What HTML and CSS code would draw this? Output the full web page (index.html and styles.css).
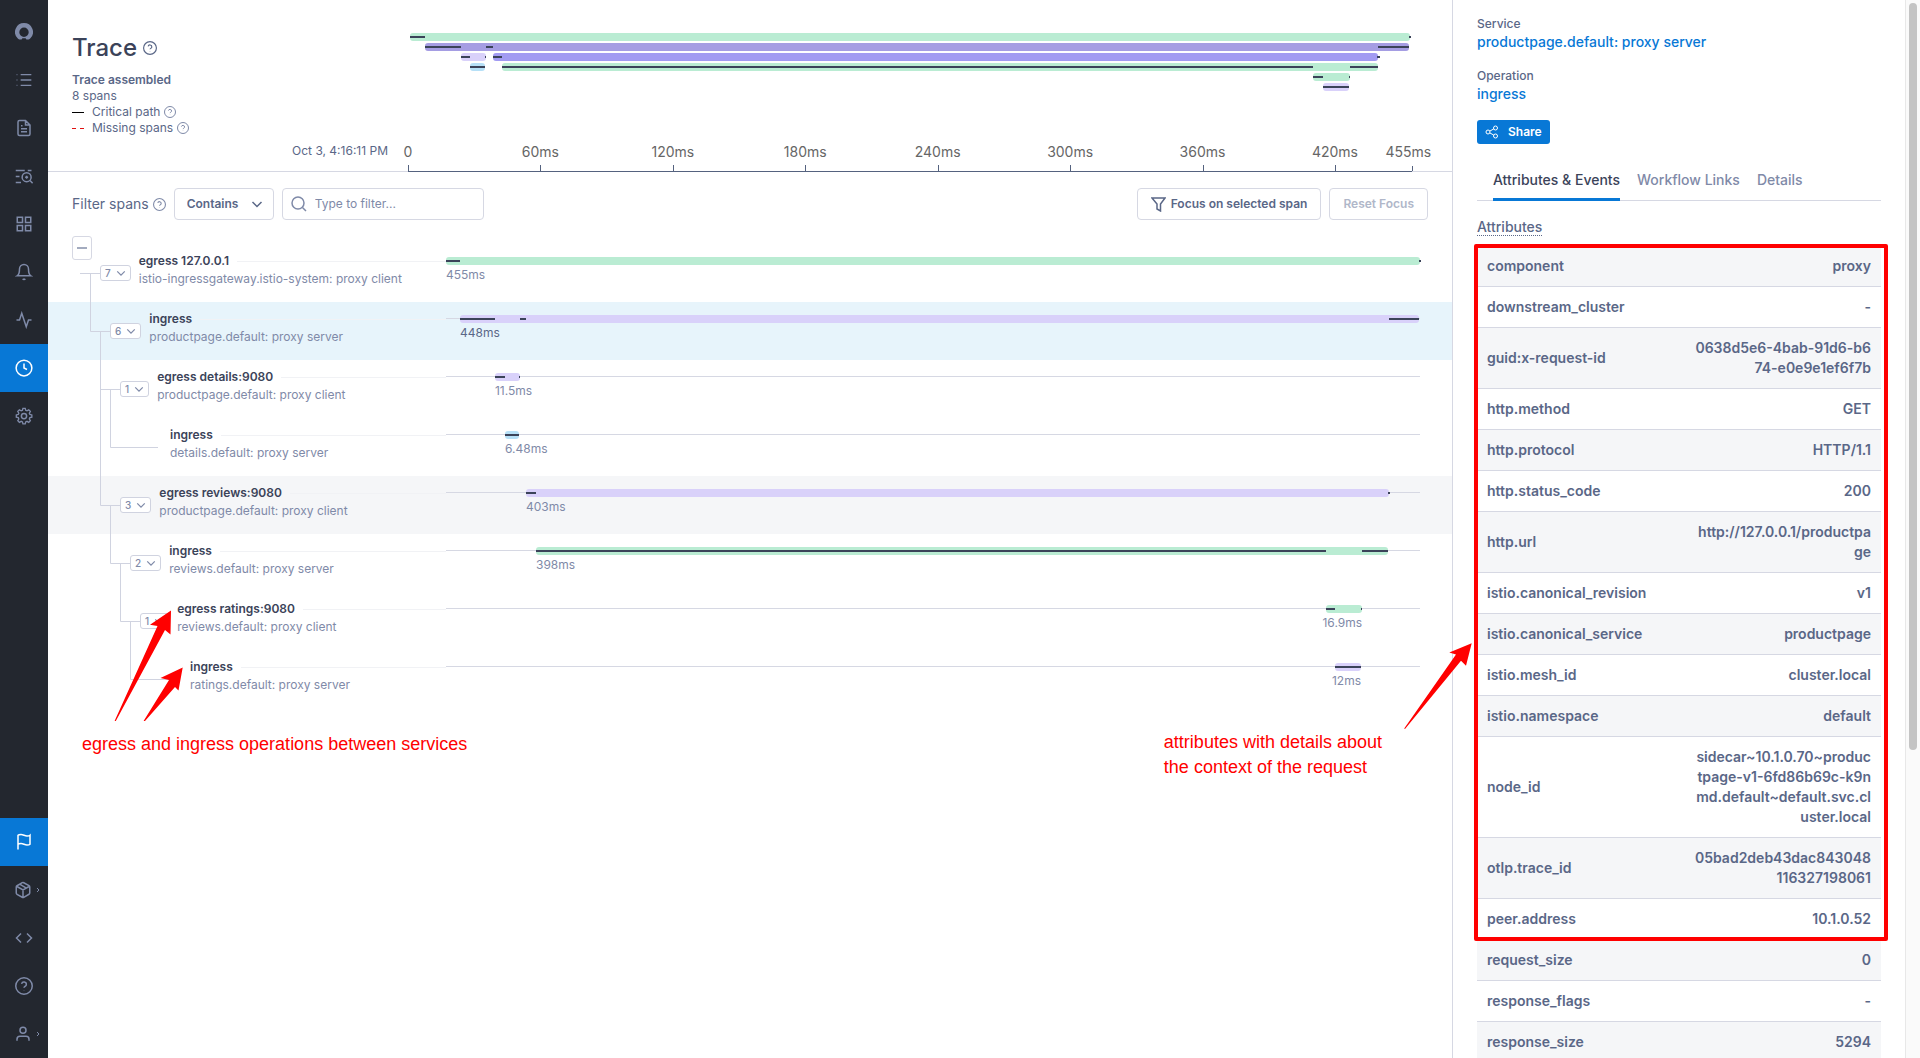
FILE: index.html
```html
<!DOCTYPE html>
<html lang="en">

<head>
    <meta charset="UTF-8">
    <meta name="viewport" content="width=device-width, initial-scale=1.0">
    <title>Trace</title>
    <link rel="stylesheet" href="styles.css">
</head>

<body>
    <!-- shared icons -->
    <svg class="sprite" aria-hidden="true">
        <symbol id="help" viewBox="0 0 24 24">
            <circle cx="12" cy="12" r="11" />
            <path d="M8.8 9.2a3.2 3.2 0 0 1 6.3 1c0 2.1-3.1 2.6-3.1 4M12 17.4v.4" />
        </symbol>
        <symbol id="chevron" viewBox="0 0 12 12">
            <path d="M1.5 4L6 8.5 10.500 4" />
        </symbol>
    </svg>

    <div class="app">
        <nav class="sidebar" aria-label="Main">
            <a href="#" class="nav-item" aria-label="Home">
                <svg class="nav-logo" width="18" height="18" viewBox="0 0 18 18"><path fill-rule="evenodd" d="M9 0a9 9 0 0 1 6.600 15.100c-.9 1-1.800 1.500-3 1.500h-1.200l-.8-1.400H7.400l-.8 1.400H5.400c-1.200 0-2.100-.5-3-1.500A9 9 0 0 1 9 0zM9 4.600a4.700 4.700 0 1 0 0 9.400 4.700 4.700 0 0 0 0-9.400z" /></svg>
            </a>
            <a href="#" class="nav-item" aria-label="Lists">
                <svg width="16" height="16" viewBox="0 0 24 24"><path d="M7 4h16M7 12h16M7 20h16M1 4h1M1 12h1M1 20h1" /></svg>
            </a>
            <a href="#" class="nav-item" aria-label="Notebooks">
                <svg width="18" height="18" viewBox="0 0 24 24"><path d="M14 2H6a2 2 0 0 0-2 2v16a2 2 0 0 0 2 2h12a2 2 0 0 0 2-2V8zM14 2v6h6M16 13H8M16 17H8M10 9H8" /></svg>
            </a>
            <a href="#" class="nav-item" aria-label="Explorer">
                <svg width="18" height="16" viewBox="0 0 24 21"><path d="M1 3h12M17 3h5M1 11h5M1 19h7" /><circle cx="15.500" cy="12" r="6" /><path d="M20 16.500l3.500 3.500M13.500 12h4M15.500 10v4" /></svg>
            </a>
            <a href="#" class="nav-item" aria-label="Dashboards">
                <svg width="18" height="18" viewBox="0 0 24 24"><path d="M3 3h7v7H3zM14 3h7v7h-7zM14 14h7v7h-7zM3 14h7v7H3z" /></svg>
            </a>
            <a href="#" class="nav-item" aria-label="Alerts">
                <svg width="18" height="18" viewBox="0 0 24 24"><path d="M18 8A6 6 0 0 0 6 8c0 7-3 9-3 9h18s-3-2-3-9M13.700 21a2 2 0 0 1-3.400 0" /></svg>
            </a>
            <a href="#" class="nav-item" aria-label="Streams">
                <svg width="18" height="18" viewBox="0 0 24 24"><path d="M22 12h-4l-3 9L9 3l-3 9H2" /></svg>
            </a>
            <a href="#" class="nav-item active" aria-label="Traces">
                <svg width="18" height="18" viewBox="0 0 24 24"><circle cx="12" cy="12" r="10.500" /><path d="M12 6v6l4 2" /></svg>
            </a>
            <a href="#" class="nav-item" aria-label="Settings">
                <svg width="18" height="18" viewBox="0 0 24 24"><circle cx="12" cy="12" r="3.500" /><path d="M10.300 1.500h3.400l.7 2.900 1.900.8 2.600-1.500 2.400 2.400-1.500 2.600.8 1.900 2.900.7v3.400l-2.900.7-.8 1.900 1.500 2.600-2.400 2.400-2.600-1.500-1.900.8-.7 2.900h-3.400l-.7-2.900-1.900-.8-2.600 1.500-2.400-2.400 1.500-2.600-.8-1.900-2.900-.7v-3.400l2.900-.7.8-1.900-1.500-2.600 2.400-2.400 2.600 1.500 1.900-.8z" transform="translate(1.300 .4) scale(.9)" /></svg>
            </a>

            <a href="#" class="nav-item active nav-bottom" aria-label="Get started">
                <svg width="18" height="18" viewBox="0 0 24 24"><path d="M4 15s1-1 4-1 5 2 8 2 4-1 4-1V3s-1 1-4 1-5-2-8-2-4 1-4 1zM4 22v-7" /></svg>
            </a>
            <a href="#" class="nav-item" aria-label="Packages">
                <svg width="18" height="18" viewBox="0 0 24 24"><path d="M16.500 9.400l-9-5.200M21 16V8a2 2 0 0 0-1-1.700l-7-4a2 2 0 0 0-2 0l-7 4A2 2 0 0 0 3 8v8a2 2 0 0 0 1 1.700l7 4a2 2 0 0 0 2 0l7-4a2 2 0 0 0 1-1.700zM3.300 7l8.700 5 8.700-5M12 22V12" /></svg>
                <svg class="nav-more" width="4" height="6" viewBox="0 0 4 6"><path d="M1 1l2 2-2 2" /></svg>
            </a>
            <a href="#" class="nav-item" aria-label="Developer">
                <svg width="18" height="18" viewBox="0 0 24 24"><path d="M16 18l6-6-6-6M8 6l-6 6 6 6" /></svg>
            </a>
            <a href="#" class="nav-item" aria-label="Help">
                <svg width="18" height="18"><use href="#help" /></svg>
            </a>
            <a href="#" class="nav-item" aria-label="Account">
                <svg width="18" height="18" viewBox="0 0 24 24"><path d="M20 21v-2a4 4 0 0 0-4-4H8a4 4 0 0 0-4 4v2" /><circle cx="12" cy="7" r="4" /></svg>
                <svg class="nav-more" width="4" height="6" viewBox="0 0 4 6"><path d="M1 1l2 2-2 2" /></svg>
            </a>
        </nav>

        <main class="trace">
            <header class="trace-header">
                <div class="summary">
                    <h1>Trace <svg class="icon" width="14" height="14"><use href="#help" /></svg></h1>
                    <p class="status">Trace assembled</p>
                    <p>8 spans</p>
                    <p class="legend"><i class="dash"></i>Critical path <svg class="icon" width="12" height="12"><use href="#help" /></svg></p>
                    <p class="legend"><i class="dash missing"></i>Missing spans <svg class="icon" width="12" height="12"><use href="#help" /></svg></p>
                    <p class="date">Oct 3, 4:16:11 PM</p>
                </div>
                <div class="overview">
                    <div class="minimap">
                        <div class="lane">
                            <span class="bar green" style="width:100%"></span>
                            <i class="crit" style="left:0;width:1.5%"></i>
                            <i class="crit" style="left:99.9%;width:.2%"></i>
                        </div>
                        <div class="lane">
                            <span class="bar purple" style="margin-left:1.5%;width:98.4%"></span>
                            <i class="crit" style="left:1.5%;width:3.6%"></i>
                            <i class="crit" style="left:7.6%;width:.7%"></i>
                            <i class="crit" style="left:96.8%;width:3.1%"></i>
                        </div>
                        <div class="lane">
                            <span class="bar lilac" style="margin-left:5.1%;width:2.5%"></span>
                            <span class="bar violet" style="margin-left:.7%;width:88.5%"></span>
                            <i class="crit" style="left:5.1%;width:.9%"></i>
                            <i class="crit" style="left:7.5%;width:.1%"></i>
                            <i class="crit" style="left:8.3%;width:.9%"></i>
                            <i class="crit" style="left:96.7%;width:.3%"></i>
                        </div>
                        <div class="lane">
                            <span class="bar blue" style="margin-left:6%;width:1.5%"></span>
                            <span class="bar green" style="margin-left:1.7%;width:87.6%"></span>
                            <i class="crit" style="left:6%;width:1.5%"></i>
                            <i class="crit" style="left:9.2%;width:81.1%"></i>
                            <i class="crit" style="left:94%;width:2.8%"></i>
                        </div>
                        <div class="lane">
                            <span class="bar green" style="margin-left:90.3%;width:3.7%"></span>
                            <i class="crit" style="left:90.3%;width:1%"></i>
                            <i class="crit" style="left:93.9%;width:.1%"></i>
                        </div>
                        <div class="lane">
                            <span class="bar lilac" style="margin-left:91.3%;width:2.6%"></span>
                            <i class="crit" style="left:91.3%;width:2.6%"></i>
                        </div>
                    </div>
                    <ol class="axis">
                        <li style="width:13.19%"><span>0</span></li>
                        <li style="width:13.19%"><span>60ms</span></li>
                        <li style="width:13.19%"><span>120ms</span></li>
                        <li style="width:13.19%"><span>180ms</span></li>
                        <li style="width:13.19%"><span>240ms</span></li>
                        <li style="width:13.19%"><span>300ms</span></li>
                        <li style="width:13.19%"><span>360ms</span></li>
                        <li style="width:7.67%"><span>420ms</span></li>
                        <li style="width:0"><span>455ms</span></li>
                    </ol>
                </div>
            </header>

            <div class="toolbar">
                <label for="filter-mode">Filter spans <svg class="icon" width="13" height="13"><use href="#help" /></svg></label>
                <div class="select">
                    <select id="filter-mode">
                        <option>Contains</option>
                    </select>
                    <svg class="icon" width="12" height="12"><use href="#chevron" /></svg>
                </div>
                <div class="search">
                    <svg class="icon" width="16" height="16" viewBox="0 0 16 16"><circle cx="7" cy="7" r="6" /><path d="M11.500 11.500L15 15" /></svg>
                    <input type="text" placeholder="Type to filter..." aria-label="Type to filter">
                </div>
                <button class="btn push"><svg class="icon" width="15" height="15" viewBox="0 0 15 15"><path d="M1 1h13L9.500 7v7L6 12V7z" /></svg>Focus on selected span</button>
                <button class="btn" disabled>Reset Focus</button>
            </div>

            <button class="collapse" aria-label="Collapse all"></button>

            <div class="spans">
                <div class="row">
                    <div class="node">
                        <svg class="branch" width="20" height="58"><path d="M0 29.500H20M10.500 29V58" /></svg>
                        <button class="count">7<svg class="icon" width="10" height="10"><use href="#chevron" /></svg></button>
                        <div class="name"><h3>egress 127.0.0.1</h3><p>istio-ingressgateway.istio-system: proxy client</p></div>
                    </div>
                    <div class="track">
                        <div class="lane">
                            <span class="bar green" style="width:100%"></span>
                            <i class="crit" style="left:0;width:1.44%"></i>
                            <i class="crit" style="left:99.9%;width:.2%"></i>
                        </div>
                        <p class="time">455ms</p>
                    </div>
                </div>
                <div class="row selected">
                    <div class="node">
                        <svg class="branch" width="30" height="58"><path d="M10.500 0V29.500H30M20.500 29V58" /></svg>
                        <button class="count">6<svg class="icon" width="10" height="10"><use href="#chevron" /></svg></button>
                        <div class="name"><h3>ingress</h3><p>productpage.default: proxy server</p></div>
                    </div>
                    <div class="track">
                        <div class="lane">
                            <span class="bar lilac" style="margin-left:1.44%;width:98.46%"></span>
                            <i class="crit" style="left:1.44%;width:3.59%"></i>
                            <i class="crit" style="left:7.6%;width:.62%"></i>
                            <i class="crit" style="left:96.82%;width:3.08%"></i>
                        </div>
                        <p class="time" style="margin-left:1.44%">448ms</p>
                    </div>
                </div>
                <div class="row">
                    <div class="node">
                        <svg class="branch" width="40" height="58"><path d="M20.500 0V58M20.500 29.500H40M30.500 29V58" /></svg>
                        <button class="count">1<svg class="icon" width="10" height="10"><use href="#chevron" /></svg></button>
                        <div class="name"><h3>egress details:9080</h3><p>productpage.default: proxy client</p></div>
                    </div>
                    <div class="track">
                        <div class="lane">
                            <span class="bar lilac" style="margin-left:5.03%;width:2.57%"></span>
                            <i class="crit" style="left:5.03%;width:1.03%"></i>
                            <i class="crit" style="left:7.5%;width:.1%"></i>
                        </div>
                        <p class="time" style="margin-left:5.03%">11.5ms</p>
                    </div>
                </div>
                <div class="row">
                    <div class="node leaf">
                        <svg class="branch" width="78" height="58"><path d="M20.500 0V58M30.500 0V29.500H78" /></svg>
                        <div class="name"><h3>ingress</h3><p>details.default: proxy server</p></div>
                    </div>
                    <div class="track">
                        <div class="lane">
                            <span class="bar blue" style="margin-left:6.06%;width:1.44%"></span>
                            <i class="crit" style="left:6.06%;width:1.44%"></i>
                        </div>
                        <p class="time" style="margin-left:6.06%">6.48ms</p>
                    </div>
                </div>
                <div class="row hovered">
                    <div class="node">
                        <svg class="branch" width="40" height="58"><path d="M20.500 0V29.500H40M30.500 29V58" /></svg>
                        <button class="count">3<svg class="icon" width="10" height="10"><use href="#chevron" /></svg></button>
                        <div class="name"><h3>egress reviews:9080</h3><p>productpage.default: proxy client</p></div>
                    </div>
                    <div class="track">
                        <div class="lane">
                            <span class="bar lilac" style="margin-left:8.21%;width:88.61%"></span>
                            <i class="crit" style="left:8.21%;width:1.03%"></i>
                            <i class="crit" style="left:96.71%;width:.21%"></i>
                        </div>
                        <p class="time" style="margin-left:8.21%">403ms</p>
                    </div>
                </div>
                <div class="row">
                    <div class="node">
                        <svg class="branch" width="50" height="58"><path d="M30.500 0V29.500H50M40.500 29V58" /></svg>
                        <button class="count">2<svg class="icon" width="10" height="10"><use href="#chevron" /></svg></button>
                        <div class="name"><h3>ingress</h3><p>reviews.default: proxy server</p></div>
                    </div>
                    <div class="track">
                        <div class="lane">
                            <span class="bar green" style="margin-left:9.24%;width:87.47%"></span>
                            <i class="crit" style="left:9.24%;width:81.11%"></i>
                            <i class="crit" style="left:94.05%;width:2.66%"></i>
                        </div>
                        <p class="time" style="margin-left:9.24%">398ms</p>
                    </div>
                </div>
                <div class="row">
                    <div class="node">
                        <svg class="branch" width="60" height="58"><path d="M40.500 0V29.500H60M50.500 29V58" /></svg>
                        <button class="count">1<svg class="icon" width="10" height="10"><use href="#chevron" /></svg></button>
                        <div class="name"><h3>egress ratings:9080</h3><p>reviews.default: proxy client</p></div>
                    </div>
                    <div class="track">
                        <div class="lane">
                            <span class="bar green" style="margin-left:90.35%;width:3.7%"></span>
                            <i class="crit" style="left:90.35%;width:.92%"></i>
                            <i class="crit" style="left:93.94%;width:.1%"></i>
                        </div>
                        <p class="time end" style="margin-right:5.95%">16.9ms</p>
                    </div>
                </div>
                <div class="row">
                    <div class="node leaf">
                        <svg class="branch" width="98" height="58"><path d="M50.500 0V29.500H98" /></svg>
                        <div class="name"><h3>ingress</h3><p>ratings.default: proxy server</p></div>
                    </div>
                    <div class="track">
                        <div class="lane">
                            <span class="bar lilac" style="margin-left:91.27%;width:2.67%"></span>
                            <i class="crit" style="left:91.27%;width:2.67%"></i>
                        </div>
                        <p class="time end" style="margin-right:6.06%">12ms</p>
                    </div>
                </div>
            </div>
        </main>

        <aside class="panel">
            <div class="details">
                <dl>
                    <dt>Service</dt>
                    <dd><a href="#">productpage.default: proxy server</a></dd>
                    <dt>Operation</dt>
                    <dd><a href="#">ingress</a></dd>
                </dl>
                <button class="share"><svg width="14" height="14" viewBox="0 0 14 14"><circle cx="3" cy="7" r="2" /><circle cx="10.500" cy="3" r="2" /><circle cx="10.500" cy="11" r="2" /><path d="M4.800 6.100l4-2.200M4.800 7.900l4 2.200" /></svg>Share</button>

                <div class="tabs" role="tablist">
                    <button role="tab" class="tab current" aria-selected="true">Attributes &amp; Events</button>
                    <button role="tab" class="tab">Workflow Links</button>
                    <button role="tab" class="tab">Details</button>
                </div>

                <h2><span>Attributes</span></h2>
                <div class="attributes">
                    <table>
                        <tr><th>component</th><td>proxy</td></tr>
                        <tr><th>downstream_cluster</th><td>-</td></tr>
                        <tr><th>guid:x-request-id</th><td>0638d5e6-4bab-91d6-b674-e0e9e1ef6f7b</td></tr>
                        <tr><th>http.method</th><td>GET</td></tr>
                        <tr><th>http.protocol</th><td>HTTP/1.1</td></tr>
                        <tr><th>http.status_code</th><td>200</td></tr>
                        <tr><th>http.url</th><td>http://127.0.0.1/productpage</td></tr>
                        <tr><th>istio.canonical_revision</th><td>v1</td></tr>
                        <tr><th>istio.canonical_service</th><td>productpage</td></tr>
                        <tr><th>istio.mesh_id</th><td>cluster.local</td></tr>
                        <tr><th>istio.namespace</th><td>default</td></tr>
                        <tr><th>node_id</th><td>sidecar~10.1.0.70~productpage-v1-6fd86b69c-k9nmd.default~default.svc.cluster.local</td></tr>
                        <tr><th>otlp.trace_id</th><td>05bad2deb43dac843048116327198061</td></tr>
                        <tr><th>peer.address</th><td>10.1.0.52</td></tr>
                        <tr><th>request_size</th><td>0</td></tr>
                        <tr><th>response_flags</th><td>-</td></tr>
                        <tr><th>response_size</th><td>5294</td></tr>
                    </table>
                    <div class="highlight"></div>
                </div>
            </div>
            <div class="scrollbar"><div class="thumb"></div></div>
        </aside>

        <!-- notes on top of the page -->
        <svg class="arrows-left" width="80" height="120" viewBox="110 605 80 120">
            <path d="M171 610.500L150 624.700l7.500 1.300L114.600 721h1.200L165 630l5.500 4.500z" />
            <path d="M182.700 667.500L160.500 678l8.500 2-25.400 41h1.400l30-34 3.500 3.500z" />
        </svg>
        <p class="note note-left">egress and ingress operations between services</p>
        <svg class="arrow-right" width="70" height="90" viewBox="1404 641 70 90">
            <path d="M1471.700 643.300l-22.400 9.200 6.700 2-51.800 74 .8.500 56-68.200 5 5z" />
        </svg>
        <p class="note note-right">attributes with details about<br>the context of the request</p>
    </div>
</body>

</html>
```

FILE: styles.css
```css
* {
    margin: 0;
    padding: 0;
    box-sizing: border-box;
}

body {
    font-family: Inter, "Liberation Sans", sans-serif;
    font-size: 12px;
    line-height: 16px;
    color: #5a6787;
    background: #fff;
}

button,
input,
select {
    font: inherit;
    color: inherit;
}

a {
    text-decoration: none;
}

svg {
    fill: none;
    stroke: currentColor;
    stroke-width: 2;
    flex: none;
}

.icon {
    stroke-width: 1.5;
}

.sprite {
    position: absolute;
    width: 0;
    height: 0;
}

.app {
    position: relative;
    display: flex;
    height: 100vh;
    overflow: hidden;
}

/* sidebar */
.sidebar {
    width: 48px;
    padding-top: 8px;
    display: flex;
    flex-direction: column;
    flex: none;
    background: #23272f;
}

.nav-item {
    height: 48px;
    display: flex;
    justify-content: center;
    align-items: center;
    color: #7f8aa8;
}

.nav-item.active {
    background: #0878d6;
    color: #fff;
}

.nav-bottom {
    margin-top: auto;
}

.nav-logo {
    fill: currentColor;
    stroke: none;
}

.nav-more {
    stroke-width: 1;
    margin-left: 4px;
    margin-right: -6px;
}

/* main */
.trace {
    flex: 1;
    min-width: 0;
}

.trace-header {
    display: grid;
    grid-template-columns: 336px 1fr;
    height: 172px;
    padding: 32px 40px 0 24px;
    border-bottom: 1px solid #d6d8e3;
}

h1 {
    display: flex;
    align-items: center;
    gap: 6px;
    margin-bottom: 8px;
    font-size: 24px;
    line-height: 32px;
    font-weight: 500;
    color: #3b4359;
}

h1 .icon {
    stroke-width: 2;
    color: #5a6787;
}

.status {
    font-weight: 600;
}

.legend {
    display: flex;
    align-items: center;
    gap: 4px;
}

.legend .icon,
.toolbar label .icon {
    stroke-width: 2;
    color: #7f8aa8;
}

.dash {
    width: 12px;
    margin-right: 4px;
    border-top: 1px solid #000;
}

.dash.missing {
    height: 1px;
    border: 0;
    background: linear-gradient(90deg, #e01010 4px, transparent 4px 8px, #e01010 8px);
}

.date {
    margin: 7px 20px 0 0;
    text-align: right;
}

.overview {
    display: flex;
    flex-direction: column;
    justify-content: space-between;
}

.minimap {
    display: grid;
    gap: 2px;
    padding-top: 1px;
    margin: 0 2px;
}

.lane {
    position: relative;
    display: flex;
    height: 8px;
}

.bar {
    border-radius: 3px;
}

.green {
    background: #baecd3;
}

.lilac {
    background: #d9d1fa;
}

.purple {
    background: #a59de3;
}

.violet {
    background: #a29bf2;
}

.blue {
    background: #b6e0f7;
}

.crit {
    position: absolute;
    top: 3px;
    height: 2px;
    background: #3b4359;
}

.axis {
    display: flex;
    list-style: none;
    margin-bottom: -1px;
    border-bottom: 1px solid #55627f;
}

.axis li {
    padding-bottom: 6px;
    background: linear-gradient(#55627f, #55627f) 0 100% / 1px 6px no-repeat;
}

.axis li:last-child {
    margin-right: -1px;
    border-left: 1px solid #55627f;
    border-image: linear-gradient(transparent 23px, #55627f 23px) 1;
}

.axis span {
    display: inline-block;
    transform: translateX(-50%);
    font-size: 14px;
    line-height: 20px;
    padding-bottom: 3px;
    color: #666;
}

.axis li:last-child span {
    transform: translateX(-60%);
}

/* toolbar */
.toolbar {
    display: flex;
    align-items: center;
    gap: 8px;
    padding: 16px 24px;
}

.toolbar label {
    display: flex;
    align-items: center;
    gap: 4px;
    font-size: 14px;
}

.select {
    position: relative;
}

.select select {
    width: 100px;
    height: 32px;
    padding: 0 12px;
    appearance: none;
    background: #fff;
    border: 1px solid #d6d8e3;
    border-radius: 4px;
    font-weight: 600;
}

.select .icon {
    position: absolute;
    right: 11px;
    top: 10px;
}

.search {
    display: flex;
    align-items: center;
    gap: 8px;
    width: 202px;
    height: 32px;
    padding: 0 8px;
    border: 1px solid #d6d8e3;
    border-radius: 4px;
    color: #7f8aa8;
}

.search input {
    width: 100%;
    border: 0;
    outline: 0;
}

.search input::placeholder {
    color: #7f8aa8;
}

.btn {
    display: flex;
    align-items: center;
    gap: 5px;
    height: 32px;
    padding: 0 13px;
    background: #fff;
    border: 1px solid #d6d8e3;
    border-radius: 4px;
    font-weight: 600;
}

.btn:disabled {
    color: #b0b7c9;
}

.push {
    margin-left: auto;
}

.collapse {
    position: relative;
    display: flex;
    justify-content: center;
    align-items: center;
    width: 20px;
    height: 24px;
    margin: 0 0 -16px 24px;
    background: #fff;
    border: 1px solid #d6d8e3;
    border-radius: 3px;
}

.collapse::before {
    content: "";
    width: 10px;
    height: 2px;
    background: #a3abbf;
}

/* span rows */
.row {
    display: flex;
    height: 58px;
    padding: 0 32px;
}

.selected {
    background: #e7f4fb;
}

.hovered {
    background: #f5f6f8;
}

.node {
    display: flex;
    align-items: center;
    width: 366px;
    flex: none;
}

.branch {
    stroke: #d0d3e0;
    stroke-width: 1;
}

.count {
    display: flex;
    align-items: center;
    gap: 5px;
    height: 16px;
    padding: 0 4px;
    background: #fff;
    border: 1px solid #d0d3e0;
    border-radius: 3px;
    font-size: 10px;
    font-weight: 500;
    color: #7f8aa8;
}

.name {
    flex: 1;
    align-self: flex-start;
    padding: 8px 0 0 8px;
    line-height: 18px;
    color: #7f8aa8;
}

.leaf .name {
    padding-left: 12px;
}

.name h3 {
    display: flex;
    align-items: center;
    gap: 8px;
    font-size: 12px;
    font-weight: 600;
    color: #3b4359;
}

.name h3::after {
    content: "";
    flex: 1;
    border-top: 1px solid #f1f2f5;
}

.track {
    position: relative;
    flex: 1;
    padding-top: 13px;
}

.track::before {
    content: "";
    position: absolute;
    top: 16px;
    width: 100%;
    border-top: 1px solid #d6d8e3;
}

.time {
    padding-top: 2px;
    color: #7f8aa8;
}

.selected .time {
    color: #5a6787;
}

.time.end {
    text-align: right;
}

/* details panel */
.panel {
    display: flex;
    width: 468px;
    flex: none;
    border-left: 1px solid #d6d8e3;
}

.details {
    flex: 1;
    padding: 16px 24px 0;
}

dt {
    font-weight: 500;
}

dd {
    margin-bottom: 16px;
    font-size: 14px;
    line-height: 20px;
    font-weight: 500;
}

dd a {
    color: #0878d6;
}

.share {
    display: flex;
    align-items: center;
    gap: 9px;
    height: 24px;
    padding: 0 8px;
    background: #0878d6;
    border: 0;
    border-radius: 3px;
    font-weight: 600;
    color: #fff;
}

.share svg {
    stroke-width: 1;
}

.tabs {
    display: flex;
    gap: 17px;
    margin: 16px 0;
    padding-left: 16px;
    box-shadow: inset 0 -1px #d6d8e3;
}

.tab {
    padding: 10px 0 8px;
    background: none;
    border: 0;
    border-bottom: 3px solid transparent;
    font-size: 14px;
    line-height: 20px;
    font-weight: 500;
    color: #7f8aa8;
}

.tab.current {
    border-color: #0878d6;
    color: #3b4359;
}

h2 {
    margin-bottom: 9px;
    font-size: 14px;
    line-height: 20px;
    font-weight: 500;
}

h2 span {
    border-bottom: 1px dotted #5a6787;
}

.attributes {
    position: relative;
}

table {
    width: 100%;
    table-layout: fixed;
    border-collapse: separate;
    border-spacing: 0;
    font-size: 14px;
    line-height: 20px;
}

th,
td {
    padding: 10px;
    border-bottom: 1px solid #d6d8e3;
    font-weight: 600;
    text-align: left;
}

td {
    padding-left: 14px;
    text-align: right;
    word-break: break-all;
}

tr:nth-child(odd) {
    background: #f5f6f8;
}

.highlight {
    position: absolute;
    top: -2px;
    left: -3px;
    right: -7px;
    height: 697px;
    border: 4px solid #f00;
    border-radius: 2px;
}

.scrollbar {
    width: 15px;
    padding: 3px;
    background: #fafafa;
    border-left: 1px solid #e8e8e8;
}

.thumb {
    width: 8px;
    height: 747px;
    border-radius: 4px;
    background: #c4c4c4;
}

/* notes */
.note {
    position: absolute;
    font-family: "Liberation Sans", Arial, sans-serif;
    font-size: 18px;
    line-height: 25px;
    color: #f00;
}

.note-left {
    left: 82px;
    top: 732px;
}

.note-right {
    right: 538px;
    top: 730px;
}

.arrows-left,
.arrow-right {
    position: absolute;
    fill: #f00;
    stroke: none;
}

.arrows-left {
    left: 110px;
    top: 605px;
}

.arrow-right {
    right: 446px;
    top: 641px;
}
```
